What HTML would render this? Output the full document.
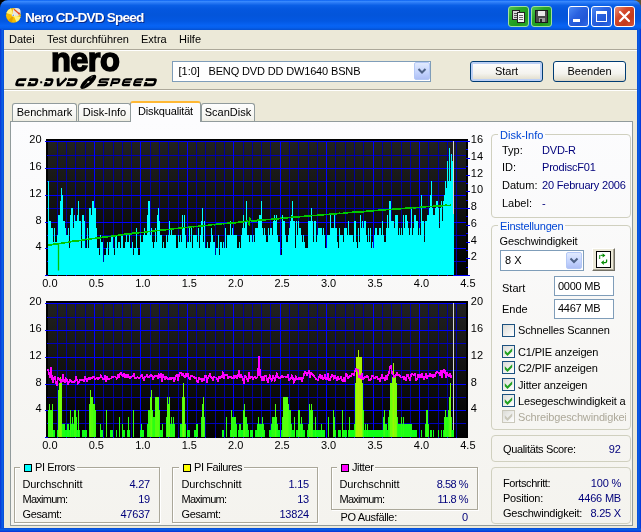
<!DOCTYPE html><html><head><meta charset="utf-8"><title>Nero CD-DVD Speed</title><style>
*{box-sizing:border-box;margin:0;padding:0}
html,body{width:641px;height:532px;overflow:hidden;background:#ece9d8}
body{font-family:"Liberation Sans",sans-serif;font-size:11px;color:#000;position:relative}
.abs{position:absolute}
#root{position:absolute;left:0;top:0;width:641px;height:532px;will-change:transform;transform:translateZ(0)}
.t{position:absolute;white-space:nowrap;line-height:13px;height:13px}
.nv{color:#00007b}
.r{text-align:right}
#title{left:0;top:0;width:641px;height:30px;background:linear-gradient(to bottom,#0058ee 0%,#3a8cff 4%,#2a7af5 9%,#0a5fe6 18%,#0457df 30%,#0355da 50%,#0358e2 70%,#0763f4 85%,#0660ee 92%,#0550d0 100%);border-radius:8px 8px 0 0}
#bl{left:0;top:29px;width:4px;height:503px;background:linear-gradient(to right,#0831d9,#0855dd 40%,#0a5fe8 70%,#0746d0)}
#br{left:637px;top:29px;width:4px;height:503px;background:linear-gradient(to left,#0831d9,#0855dd 40%,#0a5fe8 70%,#0746d0)}
#bb{left:0;top:528px;width:641px;height:4px;background:linear-gradient(to top,#0831d9,#0855dd 40%,#0a5fe8 70%,#0746d0)}
.cb{position:absolute;top:6px;width:21px;height:21px;border-radius:3px;border:1px solid #fff}
.cbb{background:linear-gradient(135deg,#4d8bf5 0%,#2a62e0 40%,#2257d6 70%,#2f6ae8 100%)}
.cbx{background:linear-gradient(135deg,#e9907a 0%,#d5492b 35%,#c33a1c 70%,#d8553a 100%)}
.cbg{background:linear-gradient(135deg,#52c452 0%,#2aa62a 35%,#1c9a1c 70%,#30ac30 100%);border-color:#9fe09f}
.sep{position:absolute;left:4px;width:633px;height:2px;border-top:1px solid #aca899;border-bottom:1px solid #fff}
.tab{position:absolute;top:103px;height:19px;border:1px solid #919b9c;border-bottom:none;border-radius:3px 3px 0 0;background:linear-gradient(to bottom,#fefefe,#f3f3ee 80%,#ebeadb);text-align:center;line-height:17px}
#pane{left:10px;top:121px;width:623px;height:405px;border:1px solid #919b9c;background:linear-gradient(to bottom,#fcfcfe,#f4f3ee)}
.gb{position:absolute;border:1px solid #d0d0bf;border-radius:4px}
.gt{position:absolute;white-space:nowrap;line-height:13px;color:#0046d5;background:#f8f8f6;padding:0 2px}
.edit{position:absolute;border:1px solid #7f9db9;background:#fff}
.btn{position:absolute;border:1px solid #003c74;border-radius:3px;background:linear-gradient(to bottom,#fff,#f4f3ee 60%,#e3e0d0 90%,#d6d0c5);text-align:center;line-height:19px}
.chk{position:absolute;width:13px;height:13px;border:1px solid #1c5180;background:linear-gradient(135deg,#dcdcd7,#fff)}
</style></head><body><div id="root">
<div class="abs" style="left:0;top:0;width:8px;height:8px;background:#000"></div><div class="abs" style="left:633px;top:0;width:8px;height:8px;background:#5e5232"></div><div id="title" class="abs"></div><div id="bl" class="abs"></div><div id="br" class="abs"></div><div id="bb" class="abs"></div>
<svg class="abs" style="left:0;top:0" width="30" height="30" viewBox="0 0 30 30"><circle cx="13.4" cy="15.3" r="7.4" fill="#f6bd00"/><path d="M13.4 15.3 L6.3 13 A7.4 7.4 0 0 1 11 8.3 Z" fill="#fff27a"/><path d="M13.4 15.3 L20.6 17 A7.4 7.4 0 0 1 16.5 22 Z" fill="#fff27a"/><path d="M13.4 15.3 L8 20.4 A7.4 7.4 0 0 0 12 22.5 Z" fill="#e0a000"/><circle cx="16.6" cy="12" r="4" fill="#e9e6e0"/><path d="M14 9.2 L19.6 14.2" stroke="#e84a1a" stroke-width="1.2"/><circle cx="19" cy="13.6" r="1" fill="#e84a1a"/><circle cx="13.2" cy="15.3" r="1.3" fill="#fff"/><circle cx="13.2" cy="15.3" r="0.7" fill="#3a7ae0"/></svg>
<div class="t" style="left:25px;top:10px;font-size:13.6px;font-weight:bold;color:#fff;line-height:16px;height:16px;text-shadow:1px 1px 0 #0a2a8a;letter-spacing:-0.8px">Nero CD-DVD Speed</div>
<div class="cb cbg" style="left:508px"><svg width="19" height="19" class="abs" style="left:0;top:0" shape-rendering="crispEdges"><rect x="3.5" y="3.5" width="7" height="9" fill="#d8d8d8" stroke="#222"/><path d="M5 6h4M5 8h4M5 10h3" stroke="#555"/><rect x="8.5" y="5.5" width="7" height="10" fill="#f4f4f4" stroke="#222"/><path d="M10 8h4M10 10h4M10 12h4" stroke="#666"/></svg></div>
<div class="cb cbg" style="left:531px"><svg width="19" height="19" class="abs" style="left:0;top:0" shape-rendering="crispEdges"><rect x="3.5" y="3.5" width="12" height="12" fill="#4a4a4a" stroke="#1a1a1a"/><rect x="6" y="4" width="7" height="5" fill="#e8e8e8"/><rect x="7" y="11" width="6" height="4" fill="#9a9a9a"/><rect x="8" y="12" width="2" height="3" fill="#2a2a2a"/></svg></div>
<div class="cb cbb" style="left:568px"><div class="abs" style="left:4px;top:12px;width:7px;height:3px;background:#fff"></div></div>
<div class="cb cbb" style="left:591px"><div class="abs" style="left:4px;top:4px;width:11px;height:11px;border:1px solid #fff;border-top-width:3px"></div></div>
<div class="cb cbx" style="left:614px"><svg width="19" height="19" class="abs" style="left:0;top:0"><path d="M5 5 L14 14 M14 5 L5 14" stroke="#fff" stroke-width="2.2" stroke-linecap="round"/></svg></div>
<div class="t " style="left:9px;top:33px;">Datei</div>
<div class="t " style="left:47px;top:33px;">Test durchführen</div>
<div class="t " style="left:141px;top:33px;">Extra</div>
<div class="t " style="left:179px;top:33px;">Hilfe</div>
<div class="sep" style="top:49px"></div>
<div class="sep" style="top:89px"></div>
<svg class="abs" style="left:0;top:50px" width="170" height="42" viewBox="0 50 170 42"><g transform="translate(0,86.2) skewX(-18)" stroke="#000" fill="none" stroke-linejoin="miter"><path transform="translate(14.5,0)" d="M9.6 -6.6000000000000005H2.9000000000000004Q1.3 -6.6000000000000005 1.3 -5.0V-2.9000000000000004Q1.3 -1.3 2.9000000000000004 -1.3H9.299999999999999" stroke-width="2.6"/><path transform="translate(27.2,0)" d="M0 -6.6000000000000005H6.4Q8.0 -6.6000000000000005 8.0 -5.0V-2.9000000000000004Q8.0 -1.3 6.4 -1.3H1.3V-4.25" stroke-width="2.6"/><path transform="translate(43.5,0)" d="M0 -6.6000000000000005H5.299999999999999Q6.8999999999999995 -6.6000000000000005 6.8999999999999995 -5.0V-2.9000000000000004Q6.8999999999999995 -1.3 5.299999999999999 -1.3H1.3V-4.25" stroke-width="2.6"/><path transform="translate(54.4,0)" d="M1.0 -7.9L3.5 -1.3H5.1L9.6 -7.9" stroke-width="2.6"/><path transform="translate(65.9,0)" d="M0 -6.6000000000000005H7.0Q8.6 -6.6000000000000005 8.6 -5.0V-2.9000000000000004Q8.6 -1.3 7.0 -1.3H1.3V-4.25" stroke-width="2.6"/><path transform="translate(97.1,0)" d="M10.0 -6.825H2.675Q1.075 -6.825 1.075 -5.625V-4.95Q1.075 -3.95 2.675 -3.95H7.325000000000001Q8.925 -3.95 8.925 -2.95V-2.275Q8.925 -1.075 7.325000000000001 -1.075H0" stroke-width="2.15"/><path transform="translate(109.7,0)" d="M1.075 0V-6.825H6.125Q7.7250000000000005 -6.825 7.7250000000000005 -5.625V-4.45Q7.7250000000000005 -3.35 6.125 -3.35H1.075" stroke-width="2.15"/><path transform="translate(121.0,0)" d="M8.8 -6.825H2.675Q1.075 -6.825 1.075 -5.225V-2.675Q1.075 -1.075 2.675 -1.075H8.5M1.075 -3.95H8.200000000000001" stroke-width="2.15"/><path transform="translate(132.3,0)" d="M8.6 -6.825H2.675Q1.075 -6.825 1.075 -5.225V-2.675Q1.075 -1.075 2.675 -1.075H8.299999999999999M1.075 -3.95H8.0" stroke-width="2.15"/><path transform="translate(143.4,0)" d="M0 -6.6000000000000005H8.7Q10.299999999999999 -6.6000000000000005 10.299999999999999 -5.0V-2.9000000000000004Q10.299999999999999 -1.3 8.7 -1.3H1.3V-4.25" stroke-width="2.6"/></g><rect x="40.2" y="81.3" width="2" height="2" fill="#000"/><g transform="translate(88.3,81.9) rotate(-40)"><ellipse cx="0" cy="0" rx="10" ry="3.7" fill="#000"/><ellipse cx="0" cy="0" rx="1.5" ry="0.9" fill="#ece9d8"/><path d="M-8.5 1.1 L-1.5 0.2 L-1.5 -0.3 Z" fill="#ece9d8" opacity=".8"/><path d="M3 -1.4 L7 -2.2 L6.5 -1.2 Z" fill="#ece9d8" opacity=".6"/></g><text x="51" y="71.4" font-family="Liberation Sans, sans-serif" font-weight="bold" font-size="32.6" letter-spacing="-0.6" stroke="#000" stroke-width="1.5" fill="#000">nero</text></svg>
<div class="edit" style="left:172px;top:61px;width:259px;height:21px"></div>
<div class="t " style="left:178.5px;top:65px;">[1:0]</div>
<div class="t " style="left:208.5px;top:65px;letter-spacing:-0.15px;">BENQ DVD DD DW1640 BSNB</div>
<div class="abs" style="left:414px;top:62px;width:16px;height:18px;border-radius:2px;background:linear-gradient(to bottom,#e1eafe,#c3d3fd 60%,#aebff5);border:1px solid #b4c8f6"><svg width="14" height="16" class="abs" style="left:0;top:0"><path d="M3.5 6 L7 9.5 L10.5 6" stroke="#4d6185" stroke-width="2" fill="none"/></svg></div>
<div class="btn" style="left:470px;top:61px;width:73px;height:21px;box-shadow:inset 0 0 0 2px #bcd0f5">Start</div>
<div class="btn" style="left:553px;top:61px;width:73px;height:21px">Beenden</div>
<div class="tab" style="left:12px;width:65px">Benchmark</div>
<div class="tab" style="left:78px;width:53px">Disk-Info</div>
<div class="tab" style="left:201px;width:54px">ScanDisk</div>
<div id="pane" class="abs"></div>
<div class="tab" style="left:130px;width:71px;top:101px;height:21px;background:#fcfcfe;border-top:2px solid #ffb834;border-radius:3px 3px 0 0;line-height:17px;letter-spacing:-0.15px">Diskqualität</div>
<svg class="abs" style="left:0;top:0" width="641" height="532" viewBox="0 0 641 532"><defs><linearGradient id="bg" x1="0" y1="0" x2="0" y2="1"><stop offset="0" stop-color="#222221"/><stop offset="1" stop-color="#000"/></linearGradient></defs><g shape-rendering="crispEdges"><rect x="46" y="139" width="422" height="137" fill="url(#bg)"/><g fill="#00009c"><rect x="57" y="141" width="1" height="135"/><rect x="66" y="141" width="1" height="135"/><rect x="75" y="141" width="1" height="135"/><rect x="85" y="141" width="1" height="135"/><rect x="103" y="141" width="1" height="135"/><rect x="113" y="141" width="1" height="135"/><rect x="122" y="141" width="1" height="135"/><rect x="131" y="141" width="1" height="135"/><rect x="150" y="141" width="1" height="135"/><rect x="159" y="141" width="1" height="135"/><rect x="168" y="141" width="1" height="135"/><rect x="178" y="141" width="1" height="135"/><rect x="196" y="141" width="1" height="135"/><rect x="205" y="141" width="1" height="135"/><rect x="215" y="141" width="1" height="135"/><rect x="224" y="141" width="1" height="135"/><rect x="243" y="141" width="1" height="135"/><rect x="252" y="141" width="1" height="135"/><rect x="261" y="141" width="1" height="135"/><rect x="270" y="141" width="1" height="135"/><rect x="289" y="141" width="1" height="135"/><rect x="298" y="141" width="1" height="135"/><rect x="308" y="141" width="1" height="135"/><rect x="317" y="141" width="1" height="135"/><rect x="335" y="141" width="1" height="135"/><rect x="345" y="141" width="1" height="135"/><rect x="354" y="141" width="1" height="135"/><rect x="363" y="141" width="1" height="135"/><rect x="382" y="141" width="1" height="135"/><rect x="391" y="141" width="1" height="135"/><rect x="401" y="141" width="1" height="135"/><rect x="410" y="141" width="1" height="135"/><rect x="428" y="141" width="1" height="135"/><rect x="438" y="141" width="1" height="135"/><rect x="447" y="141" width="1" height="135"/><rect x="456" y="141" width="1" height="135"/></g><g fill="#0000b8"><rect x="47" y="261" width="419" height="1"/><rect x="47" y="235" width="419" height="1"/><rect x="47" y="208" width="419" height="1"/><rect x="47" y="181" width="419" height="1"/><rect x="47" y="155" width="419" height="1"/></g><g fill="#0000ff"><rect x="47" y="141" width="1" height="135"/><rect x="94" y="141" width="1" height="135"/><rect x="140" y="141" width="1" height="135"/><rect x="187" y="141" width="1" height="135"/><rect x="233" y="141" width="1" height="135"/><rect x="280" y="141" width="1" height="135"/><rect x="326" y="141" width="1" height="135"/><rect x="373" y="141" width="1" height="135"/><rect x="419" y="141" width="1" height="135"/><rect x="466" y="141" width="1" height="135"/><rect x="45" y="275" width="421" height="1"/><rect x="45" y="248" width="421" height="1"/><rect x="45" y="222" width="421" height="1"/><rect x="45" y="195" width="421" height="1"/><rect x="45" y="168" width="421" height="1"/><rect x="45" y="141" width="421" height="1"/></g><path d="M48 181h1V275H48zM49 221h2V275H49zM51 228h2V275H51zM53 242h1V275H53zM54 228h1V275H54zM55 242h2V275H55zM57 235h1V275H57zM58 215h2V275H58zM60 201h1V275H60zM61 188h1V275H61zM62 195h1V275H62zM63 221h2V275H63zM65 228h1V275H65zM66 235h2V275H66zM68 228h1V275H68zM69 248h1V275H69zM70 215h1V275H70zM71 208h2V275H71zM73 228h1V275H73zM74 215h1V275H74zM75 221h2V275H75zM77 215h1V275H77zM78 201h1V275H78zM79 221h2V275H79zM81 248h1V275H81zM82 215h2V275H82zM84 221h1V275H84zM85 248h2V275H85zM87 228h1V275H87zM88 248h1V275H88zM89 208h2V275H89zM91 215h1V275H91zM92 201h2V275H92zM94 208h2V275H94zM96 228h1V275H96zM97 248h2V275H97zM99 255h1V275H99zM100 235h1V275H100zM101 242h2V275H101zM103 262h1V275H103zM104 255h2V275H104zM106 248h1V275H106zM107 242h1V275H107zM108 255h1V275H108zM109 242h2V275H109zM111 235h2V275H111zM113 248h1V275H113zM114 255h1V275H114zM115 235h2V275H115zM117 248h1V275H117zM118 242h2V275H118zM120 248h1V275H120zM121 235h2V275H121zM123 248h2V275H123zM125 242h1V275H125zM126 235h1V275H126zM127 242h2V275H127zM129 235h1V275H129zM130 248h2V275H130zM132 242h1V275H132zM133 255h1V275H133zM134 248h2V275H134zM136 228h1V275H136zM137 248h1V275H137zM138 255h2V275H138zM140 235h1V275H140zM141 242h2V275H141zM143 235h1V275H143zM144 228h1V275H144zM145 235h2V275H145zM147 215h1V275H147zM148 201h2V275H148zM150 235h1V275H150zM151 228h1V275H151zM152 242h1V275H152zM153 248h1V275H153zM154 242h1V275H154zM155 228h1V275H155zM156 242h1V275H156zM157 215h1V275H157zM158 208h1V275H158zM159 221h1V275H159zM160 235h2V275H160zM162 248h1V275H162zM163 242h1V275H163zM164 248h2V275H164zM166 235h1V275H166zM167 242h1V275H167zM168 235h1V275H168zM169 221h1V275H169zM170 235h1V275H170zM171 228h1V275H171zM172 235h4V275H172zM176 248h2V275H176zM178 235h1V275H178zM179 242h1V275H179zM180 235h1V275H180zM181 242h1V275H181zM182 215h1V275H182zM183 228h1V275H183zM184 215h1V275H184zM185 235h1V275H185zM186 248h1V275H186zM187 242h2V275H187zM189 228h1V275H189zM190 242h1V275H190zM191 228h1V275H191zM192 248h1V275H192zM193 235h4V275H193zM197 242h1V275H197zM198 228h1V275H198zM199 248h1V275H199zM200 235h1V275H200zM201 221h1V275H201zM202 208h1V275H202zM203 242h1V275H203zM204 221h1V275H204zM205 248h2V275H205zM207 242h1V275H207zM208 248h2V275H208zM210 242h1V275H210zM211 228h1V275H211zM212 235h1V275H212zM213 242h2V275H213zM215 255h1V275H215zM216 248h2V275H216zM218 235h1V275H218zM219 255h1V275H219zM220 242h2V275H220zM222 248h1V275H222zM223 242h1V275H223zM224 248h1V275H224zM225 228h1V275H225zM226 248h1V275H226zM227 235h3V275H227zM230 221h1V275H230zM231 235h1V275H231zM232 228h1V275H232zM233 235h4V275H233zM237 248h2V275H237zM239 242h1V275H239zM240 248h1V275H240zM241 235h1V275H241zM242 228h1V275H242zM243 215h1V275H243zM244 228h1V275H244zM245 221h1V275H245zM246 201h1V275H246zM247 235h2V275H247zM249 242h1V275H249zM250 235h2V275H250zM252 242h1V275H252zM253 235h1V275H253zM254 242h1V275H254zM255 228h3V275H255zM258 221h1V275H258zM259 215h2V275H259zM261 201h1V275H261zM262 228h1V275H262zM263 235h1V275H263zM264 228h1V275H264zM265 235h1V275H265zM266 242h2V275H266zM268 228h1V275H268zM269 235h1V275H269zM270 228h2V275H270zM272 235h1V275H272zM273 221h1V275H273zM274 215h1V275H274zM275 221h1V275H275zM276 215h1V275H276zM277 235h1V275H277zM278 242h2V275H278zM280 255h2V275H280zM282 215h1V275H282zM283 221h2V275H283zM285 235h1V275H285zM286 242h2V275H286zM288 235h1V275H288zM289 228h1V275H289zM290 221h1V275H290zM291 215h1V275H291zM292 201h1V275H292zM293 221h2V275H293zM295 248h1V275H295zM296 221h1V275H296zM297 235h1V275H297zM298 221h1V275H298zM299 228h2V275H299zM301 235h1V275H301zM302 242h1V275H302zM303 235h1V275H303zM304 242h1V275H304zM305 248h3V275H305zM308 221h3V275H308zM311 208h1V275H311zM312 221h1V275H312zM313 242h1V275H313zM314 221h2V275H314zM316 242h1V275H316zM317 235h1V275H317zM318 228h4V275H318zM322 235h1V275H322zM323 228h1V275H323zM324 235h1V275H324zM325 248h2V275H325zM327 235h3V275H327zM330 215h1V275H330zM331 228h3V275H331zM334 215h1V275H334zM335 228h2V275H335zM337 242h1V275H337zM338 248h1V275H338zM339 228h1V275H339zM340 235h3V275H340zM343 242h1V275H343zM344 228h3V275H344zM347 235h1V275H347zM348 221h1V275H348zM349 235h4V275H349zM353 242h1V275H353zM354 221h2V275H354zM356 242h1V275H356zM357 248h1V275H357zM358 228h1V275H358zM359 242h1V275H359zM360 215h1V275H360zM361 228h1V275H361zM362 221h1V275H362zM363 228h1V275H363zM364 221h2V275H364zM366 235h1V275H366zM367 242h1V275H367zM368 228h1V275H368zM369 242h1V275H369zM370 228h1V275H370zM371 248h1V275H371zM372 242h1V275H372zM373 248h1V275H373zM374 235h1V275H374zM375 228h2V275H375zM377 235h2V275H377zM379 228h2V275H379zM381 235h1V275H381zM382 221h1V275H382zM383 235h1V275H383zM384 242h2V275H384zM386 228h1V275H386zM387 215h1V275H387zM388 228h1V275H388zM389 201h2V275H389zM391 221h3V275H391zM394 228h1V275H394zM395 215h3V275H395zM398 235h1V275H398zM399 228h1V275H399zM400 235h1V275H400zM401 228h1V275H401zM402 235h1V275H402zM403 215h1V275H403zM404 228h1V275H404zM405 215h2V275H405zM407 221h1V275H407zM408 228h1V275H408zM409 235h1V275H409zM410 228h1V275H410zM411 208h1V275H411zM412 235h1V275H412zM413 228h1V275H413zM414 215h2V275H414zM416 221h2V275H416zM418 235h1V275H418zM419 228h1V275H419zM420 235h1V275H420zM421 195h1V275H421zM422 221h2V275H422zM424 242h1V275H424zM425 221h2V275H425zM427 215h2V275H427zM429 208h1V275H429zM430 195h1V275H430zM431 181h1V275H431zM432 208h1V275H432zM433 215h2V275H433zM435 208h1V275H435zM436 201h2V275H436zM438 208h1V275H438zM439 228h1V275H439zM440 208h1V275H440zM441 201h1V275H441zM442 221h1V275H442zM443 201h1V275H443zM444 195h1V275H444zM445 181h1V275H445zM446 188h1V275H446zM447 161h1V275H447zM448 181h1V275H448zM449 148h1V275H449zM450 181h1V275H450zM451 154h1V275H451zM452 161h1V275H452z" fill="#00ffff"/><rect x="48" y="275" width="405" height="1" fill="#000"/><g fill="#0000ff"><rect x="47" y="275" width="1" height="1"/><rect x="57" y="275" width="1" height="1"/><rect x="66" y="275" width="1" height="1"/><rect x="75" y="275" width="1" height="1"/><rect x="85" y="275" width="1" height="1"/><rect x="94" y="275" width="1" height="1"/><rect x="103" y="275" width="1" height="1"/><rect x="113" y="275" width="1" height="1"/><rect x="122" y="275" width="1" height="1"/><rect x="131" y="275" width="1" height="1"/><rect x="140" y="275" width="1" height="1"/><rect x="150" y="275" width="1" height="1"/><rect x="159" y="275" width="1" height="1"/><rect x="168" y="275" width="1" height="1"/><rect x="178" y="275" width="1" height="1"/><rect x="187" y="275" width="1" height="1"/><rect x="196" y="275" width="1" height="1"/><rect x="205" y="275" width="1" height="1"/><rect x="215" y="275" width="1" height="1"/><rect x="224" y="275" width="1" height="1"/><rect x="233" y="275" width="1" height="1"/><rect x="243" y="275" width="1" height="1"/><rect x="252" y="275" width="1" height="1"/><rect x="261" y="275" width="1" height="1"/><rect x="270" y="275" width="1" height="1"/><rect x="280" y="275" width="1" height="1"/><rect x="289" y="275" width="1" height="1"/><rect x="298" y="275" width="1" height="1"/><rect x="308" y="275" width="1" height="1"/><rect x="317" y="275" width="1" height="1"/><rect x="326" y="275" width="1" height="1"/><rect x="335" y="275" width="1" height="1"/><rect x="345" y="275" width="1" height="1"/><rect x="354" y="275" width="1" height="1"/><rect x="363" y="275" width="1" height="1"/><rect x="373" y="275" width="1" height="1"/><rect x="382" y="275" width="1" height="1"/><rect x="391" y="275" width="1" height="1"/><rect x="401" y="275" width="1" height="1"/><rect x="410" y="275" width="1" height="1"/><rect x="419" y="275" width="1" height="1"/><rect x="428" y="275" width="1" height="1"/><rect x="438" y="275" width="1" height="1"/><rect x="447" y="275" width="1" height="1"/></g><rect x="453" y="141" width="1" height="73" fill="#d4d4d4"/><rect x="453" y="214" width="1" height="61" fill="#00ffff"/><rect x="46" y="139" width="422" height="2" fill="#000"/><rect x="46" y="139" width="2" height="137" fill="#000"/><rect x="466" y="139" width="2" height="137" fill="#000"/><g fill="#0000ff"><rect x="466" y="275" width="4" height="1"/><rect x="466" y="267" width="2" height="1"/><rect x="466" y="258" width="4" height="1"/><rect x="466" y="250" width="2" height="1"/><rect x="466" y="242" width="4" height="1"/><rect x="466" y="233" width="2" height="1"/><rect x="466" y="225" width="4" height="1"/><rect x="466" y="216" width="2" height="1"/><rect x="466" y="208" width="4" height="1"/><rect x="466" y="200" width="2" height="1"/><rect x="466" y="191" width="4" height="1"/><rect x="466" y="183" width="2" height="1"/><rect x="466" y="175" width="4" height="1"/><rect x="466" y="166" width="2" height="1"/><rect x="466" y="158" width="4" height="1"/><rect x="466" y="149" width="2" height="1"/><rect x="466" y="141" width="4" height="1"/><rect x="45" y="141" width="3" height="1"/><rect x="47" y="155" width="1" height="1"/><rect x="45" y="168" width="3" height="1"/><rect x="47" y="181" width="1" height="1"/><rect x="45" y="195" width="3" height="1"/><rect x="47" y="208" width="1" height="1"/><rect x="45" y="222" width="3" height="1"/><rect x="47" y="235" width="1" height="1"/><rect x="45" y="248" width="3" height="1"/><rect x="47" y="261" width="1" height="1"/><rect x="45" y="275" width="3" height="1"/></g></g><polyline points="48,245.2 49,245.2 50,245.0 51,244.9 52,244.8 53,244.3 54,244.1 55,244.4 56,243.9 57,243.7 58,244.0 59,243.5 60,243.6 61,243.2 62,243.2 63,242.7 64,242.9 65,242.8 66,242.5 67,242.5 68,242.3 69,241.8 70,242.0 71,241.8 72,241.4 73,241.1 74,241.5 75,241.1 76,241.1 77,241.0 78,240.8 79,240.8 80,240.3 81,240.4 82,240.1 83,240.2 84,240.0 85,239.4 86,239.3 87,239.2 88,239.5 89,239.1 90,239.0 91,238.7 92,238.7 93,238.5 94,238.3 95,238.3 96,238.2 97,238.2 98,238.0 99,238.0 100,237.8 101,237.8 102,237.4 103,237.0 104,237.3 105,237.2 106,237.1 107,236.7 108,236.7 109,236.2 110,236.5 111,236.2 112,235.9 113,235.6 114,236.0 115,235.9 116,235.3 117,235.6 118,235.2 119,234.9 120,234.9 121,235.1 122,235.0 123,234.4 124,234.6 125,234.1 126,234.4 127,234.1 128,234.3 129,234.2 130,233.8 131,234.0 132,233.4 133,233.2 134,233.4 135,232.9 136,232.9 137,232.9 138,232.9 139,232.5 140,232.3 141,232.7 142,232.2 143,232.5 144,232.4 145,231.9 146,231.9 147,231.8 148,231.7 149,231.6 150,231.5 151,231.4 152,231.5 153,231.1 154,230.9 155,231.0 156,230.6 157,230.5 158,230.8 159,230.4 160,230.3 161,229.9 162,230.0 163,230.0 164,229.6 165,229.8 166,229.7 167,229.3 168,229.5 169,229.3 170,229.3 171,229.0 172,229.1 173,229.0 174,228.5 175,228.4 176,228.6 177,228.7 178,228.2 179,228.2 180,228.2 181,227.9 182,227.8 183,227.7 184,227.6 185,227.6 186,227.4 187,227.3 188,227.4 189,226.9 190,227.1 191,227.1 192,226.7 193,226.6 194,226.8 195,226.4 196,226.3 197,226.3 198,226.4 199,225.9 200,225.9 201,225.8 202,226.0 203,225.7 204,225.8 205,225.3 206,225.3 207,225.4 208,225.5 209,225.1 210,224.9 211,224.7 212,224.8 213,224.5 214,224.8 215,224.7 216,224.2 217,224.2 218,224.4 219,224.2 220,224.2 221,223.8 222,223.6 223,223.6 224,223.8 225,223.4 226,223.4 227,223.3 228,223.2 229,223.1 230,223.3 231,222.8 232,222.6 233,223.0 234,222.9 235,222.9 236,222.4 237,222.7 238,222.6 239,222.0 240,222.3 241,222.2 242,222.0 243,221.8 244,221.6 245,221.5 246,221.4 247,221.2 248,221.4 249,224.1 250,218.4 251,220.8 252,221.2 253,221.0 254,221.1 255,220.9 256,220.9 257,220.6 258,220.1 259,220.5 260,220.1 261,220.0 262,220.2 263,220.0 264,219.8 265,220.1 266,219.8 267,219.5 268,219.4 269,219.7 270,219.3 271,219.4 272,219.1 273,218.9 274,219.0 275,219.1 276,218.6 277,218.9 278,218.9 279,218.7 280,218.6 281,218.1 282,218.4 283,218.4 284,217.8 285,217.9 286,217.8 287,217.9 288,217.7 289,217.6 290,217.7 291,217.2 292,217.1 293,217.1 294,217.0 295,216.9 296,217.3 297,217.2 298,216.6 299,216.8 300,216.6 301,216.5 302,216.5 303,216.5 304,216.4 305,216.2 306,216.0 307,216.0 308,215.8 309,216.0 310,216.0 311,215.7 312,215.4 313,215.4 314,215.5 315,215.5 316,215.5 317,215.2 318,215.4 319,215.2 320,215.0 321,214.9 322,214.9 323,214.9 324,214.6 325,214.7 326,214.5 327,214.3 328,214.4 329,214.4 330,213.9 331,214.1 332,214.0 333,214.2 334,214.1 335,213.7 336,213.9 337,213.8 338,213.4 339,213.4 340,213.2 341,213.5 342,213.3 343,213.4 344,213.2 345,213.1 346,213.0 347,212.9 348,212.5 349,212.7 350,212.3 351,212.3 352,212.6 353,212.1 354,212.0 355,211.9 356,212.3 357,211.8 358,211.7 359,212.1 360,211.6 361,211.9 362,211.7 363,211.8 364,211.7 365,211.4 366,211.5 367,211.0 368,211.3 369,211.1 370,211.1 371,210.7 372,211.0 373,211.0 374,210.4 375,210.5 376,210.6 377,210.7 378,210.2 379,210.1 380,210.1 381,210.2 382,210.2 383,209.9 384,209.8 385,209.8 386,209.7 387,209.6 388,209.4 389,209.5 390,209.7 391,209.3 392,209.5 393,209.0 394,209.3 395,209.2 396,209.1 397,208.9 398,208.8 399,208.9 400,208.9 401,208.4 402,208.3 403,208.6 404,208.7 405,208.3 406,208.2 407,208.3 408,207.9 409,207.9 410,207.8 411,207.9 412,207.7 413,207.6 414,207.8 415,207.9 416,207.4 417,207.6 418,207.3 419,207.5 420,207.3 421,207.0 422,206.9 423,206.7 424,206.9 425,206.8 426,206.6 427,206.6 428,206.5 429,206.7 430,206.3 431,206.7 432,206.3 433,206.3 434,206.2 435,206.3 436,206.2 437,206.0 438,205.9 439,206.0 440,206.0 441,205.6 442,205.8 443,205.8 444,205.5 445,205.2 446,205.2 447,205.4 448,205.3 449,205.4 450,205.3 451,204.8" fill="none" stroke="#00c800" stroke-width="1.6" shape-rendering="crispEdges"/><path d="M58.5 243 V270.5" stroke="#00c400" stroke-width="1.3" fill="none"/><g font-family="Liberation Sans, sans-serif" font-size="11" fill="#000"><text x="41.6" y="143.1" text-anchor="end">20</text><text x="41.6" y="169.9" text-anchor="end">16</text><text x="41.6" y="196.7" text-anchor="end">12</text><text x="41.6" y="223.5" text-anchor="end">8</text><text x="41.6" y="250.3" text-anchor="end">4</text><text x="470.8" y="260.4">2</text><text x="470.8" y="243.6">4</text><text x="470.8" y="226.8">6</text><text x="470.8" y="210.1">8</text><text x="470.8" y="193.3">10</text><text x="470.8" y="176.6">12</text><text x="470.8" y="159.8">14</text><text x="470.8" y="143.1">16</text><text x="49.9" y="287.2" text-anchor="middle">0.0</text><text x="96.3" y="287.2" text-anchor="middle">0.5</text><text x="142.8" y="287.2" text-anchor="middle">1.0</text><text x="189.3" y="287.2" text-anchor="middle">1.5</text><text x="235.7" y="287.2" text-anchor="middle">2.0</text><text x="282.1" y="287.2" text-anchor="middle">2.5</text><text x="328.6" y="287.2" text-anchor="middle">3.0</text><text x="375.1" y="287.2" text-anchor="middle">3.5</text><text x="421.5" y="287.2" text-anchor="middle">4.0</text><text x="467.9" y="287.2" text-anchor="middle">4.5</text></g></svg>
<svg class="abs" style="left:0;top:0" width="641" height="532" viewBox="0 0 641 532"><defs><linearGradient id="bg2" x1="0" y1="0" x2="0" y2="1"><stop offset="0" stop-color="#222221"/><stop offset="1" stop-color="#000"/></linearGradient></defs><g shape-rendering="crispEdges"><rect x="46" y="301" width="422" height="137" fill="url(#bg2)"/><g fill="#00009c"><rect x="57" y="303" width="1" height="135"/><rect x="66" y="303" width="1" height="135"/><rect x="75" y="303" width="1" height="135"/><rect x="85" y="303" width="1" height="135"/><rect x="103" y="303" width="1" height="135"/><rect x="113" y="303" width="1" height="135"/><rect x="122" y="303" width="1" height="135"/><rect x="131" y="303" width="1" height="135"/><rect x="150" y="303" width="1" height="135"/><rect x="159" y="303" width="1" height="135"/><rect x="168" y="303" width="1" height="135"/><rect x="178" y="303" width="1" height="135"/><rect x="196" y="303" width="1" height="135"/><rect x="205" y="303" width="1" height="135"/><rect x="215" y="303" width="1" height="135"/><rect x="224" y="303" width="1" height="135"/><rect x="243" y="303" width="1" height="135"/><rect x="252" y="303" width="1" height="135"/><rect x="261" y="303" width="1" height="135"/><rect x="270" y="303" width="1" height="135"/><rect x="289" y="303" width="1" height="135"/><rect x="298" y="303" width="1" height="135"/><rect x="308" y="303" width="1" height="135"/><rect x="317" y="303" width="1" height="135"/><rect x="335" y="303" width="1" height="135"/><rect x="345" y="303" width="1" height="135"/><rect x="354" y="303" width="1" height="135"/><rect x="363" y="303" width="1" height="135"/><rect x="382" y="303" width="1" height="135"/><rect x="391" y="303" width="1" height="135"/><rect x="401" y="303" width="1" height="135"/><rect x="410" y="303" width="1" height="135"/><rect x="428" y="303" width="1" height="135"/><rect x="438" y="303" width="1" height="135"/><rect x="447" y="303" width="1" height="135"/><rect x="456" y="303" width="1" height="135"/></g><g fill="#0000b8"><rect x="47" y="423" width="419" height="1"/><rect x="47" y="397" width="419" height="1"/><rect x="47" y="370" width="419" height="1"/><rect x="47" y="343" width="419" height="1"/><rect x="47" y="317" width="419" height="1"/></g><g fill="#0000ff"><rect x="47" y="303" width="1" height="135"/><rect x="94" y="303" width="1" height="135"/><rect x="140" y="303" width="1" height="135"/><rect x="187" y="303" width="1" height="135"/><rect x="233" y="303" width="1" height="135"/><rect x="280" y="303" width="1" height="135"/><rect x="326" y="303" width="1" height="135"/><rect x="373" y="303" width="1" height="135"/><rect x="419" y="303" width="1" height="135"/><rect x="466" y="303" width="1" height="135"/><rect x="45" y="437" width="421" height="1"/><rect x="45" y="410" width="421" height="1"/><rect x="45" y="384" width="421" height="1"/><rect x="45" y="357" width="421" height="1"/><rect x="45" y="330" width="421" height="1"/><rect x="45" y="303" width="421" height="1"/></g><path d="M48 410h1V437H48zM50 410h1V437H50zM51 410h1V437H51zM70 410h1V437H70zM74 410h1V437H74zM75 410h1V437H75zM78 410h1V437H78zM95 410h1V437H95zM106 410h1V437H106zM133 410h1V437H133zM148 410h1V437H148zM149 410h1V437H149zM152 410h1V437H152zM159 410h1V437H159zM231 410h1V437H231zM243 410h1V437H243zM289 410h1V437H289zM290 410h1V437H290zM298 410h1V437H298zM299 410h1V437H299zM310 410h1V437H310zM312 410h1V437H312zM333 410h1V437H333zM342 410h1V437H342zM363 410h1V437H363zM384 410h1V437H384zM389 410h1V437H389zM426 410h1V437H426zM427 410h1V437H427zM445 410h1V437H445zM448 410h1V437H448z" fill="#38ff10"/><path d="M49 404h1V437H49zM52 404h1V437H52zM89 404h1V437H89zM93 404h1V437H93zM94 404h1V437H94zM168 404h1V437H168zM202 404h1V437H202zM244 404h1V437H244zM275 404h1V437H275zM288 404h1V437H288zM309 404h1V437H309zM311 404h1V437H311z" fill="#46ff0e"/><path d="M53 430h1V437H53zM54 430h1V437H54zM57 430h1V437H57zM65 430h1V437H65zM66 430h1V437H66zM69 430h1V437H69zM77 430h1V437H77zM79 430h1V437H79zM82 430h1V437H82zM83 430h1V437H83zM84 430h1V437H84zM85 430h1V437H85zM86 430h1V437H86zM101 430h1V437H101zM102 430h1V437H102zM110 430h1V437H110zM111 430h1V437H111zM112 430h1V437H112zM116 430h1V437H116zM123 430h1V437H123zM124 430h1V437H124zM127 430h1V437H127zM129 430h1V437H129zM140 430h1V437H140zM142 430h1V437H142zM143 430h1V437H143zM160 430h1V437H160zM161 430h1V437H161zM187 430h1V437H187zM188 430h1V437H188zM189 430h1V437H189zM194 430h1V437H194zM195 430h1V437H195zM222 430h1V437H222zM223 430h1V437H223zM230 430h1V437H230zM238 430h1V437H238zM241 430h1V437H241zM242 430h1V437H242zM248 430h1V437H248zM250 430h1V437H250zM251 430h1V437H251zM252 430h1V437H252zM255 430h1V437H255zM256 430h1V437H256zM264 430h1V437H264zM269 430h1V437H269zM270 430h1V437H270zM278 430h1V437H278zM279 430h1V437H279zM281 430h1V437H281zM292 430h1V437H292zM293 430h1V437H293zM296 430h1V437H296zM297 430h1V437H297zM303 430h1V437H303zM304 430h1V437H304zM307 430h1V437H307zM313 430h1V437H313zM314 430h1V437H314zM316 430h1V437H316zM317 430h1V437H317zM318 430h1V437H318zM319 430h1V437H319zM320 430h1V437H320zM322 430h1V437H322zM323 430h1V437H323zM324 430h1V437H324zM335 430h1V437H335zM338 430h1V437H338zM339 430h1V437H339zM340 430h1V437H340zM343 430h1V437H343zM344 430h1V437H344zM345 430h1V437H345zM346 430h1V437H346zM348 430h1V437H348zM350 430h1V437H350zM351 430h1V437H351zM352 430h1V437H352zM353 430h1V437H353zM364 430h1V437H364zM366 430h1V437H366zM368 430h1V437H368zM369 430h1V437H369zM370 430h1V437H370zM371 430h1V437H371zM372 430h1V437H372zM373 430h1V437H373zM374 430h1V437H374zM375 430h1V437H375zM376 430h1V437H376zM377 430h1V437H377zM378 430h1V437H378zM379 430h1V437H379zM380 430h1V437H380zM381 430h1V437H381zM382 430h1V437H382zM387 430h1V437H387zM412 430h1V437H412zM413 430h1V437H413zM414 430h1V437H414zM415 430h1V437H415zM416 430h1V437H416zM421 430h1V437H421zM430 430h1V437H430zM431 430h1V437H431zM433 430h1V437H433zM438 430h1V437H438zM441 430h1V437H441zM443 430h1V437H443zM452 430h1V437H452z" fill="#0eff16"/><path d="M58 390h1V437H58zM90 390h1V437H90zM151 390h1V437H151z" fill="#62ff0a"/><path d="M59 383h1V437H59zM61 383h1V437H61zM183 383h1V437H183zM355 383h1V437H355zM362 383h1V437H362zM390 383h1V437H390zM391 383h1V437H391zM396 383h1V437H396zM450 383h1V437H450z" fill="#70ff08"/><path d="M60 377h1V437H60zM392 377h1V437H392zM394 377h1V437H394zM395 377h1V437H395z" fill="#7eff06"/><path d="M62 424h1V437H62zM63 424h1V437H63zM64 424h1V437H64zM67 424h1V437H67zM68 424h1V437H68zM71 424h1V437H71zM73 424h1V437H73zM100 424h1V437H100zM122 424h1V437H122zM141 424h1V437H141zM147 424h1V437H147zM162 424h1V437H162zM170 424h1V437H170zM172 424h1V437H172zM174 424h1V437H174zM180 424h1V437H180zM181 424h1V437H181zM185 424h1V437H185zM196 424h1V437H196zM197 424h1V437H197zM236 424h1V437H236zM239 424h1V437H239zM240 424h1V437H240zM247 424h1V437H247zM257 424h1V437H257zM259 424h1V437H259zM260 424h1V437H260zM261 424h1V437H261zM263 424h1V437H263zM271 424h1V437H271zM277 424h1V437H277zM291 424h1V437H291zM300 424h1V437H300zM302 424h1V437H302zM308 424h1V437H308zM321 424h1V437H321zM354 424h1V437H354zM365 424h1V437H365zM367 424h1V437H367zM385 424h1V437H385zM386 424h1V437H386zM398 424h1V437H398zM399 424h1V437H399zM400 424h1V437H400zM402 424h1V437H402zM404 424h1V437H404zM405 424h1V437H405zM406 424h1V437H406zM407 424h1V437H407zM408 424h1V437H408zM409 424h1V437H409zM410 424h1V437H410zM411 424h1V437H411zM425 424h1V437H425zM428 424h1V437H428z" fill="#1cff14"/><path d="M72 417h1V437H72zM76 417h1V437H76zM119 417h1V437H119zM128 417h1V437H128zM153 417h1V437H153zM154 417h1V437H154zM166 417h1V437H166zM171 417h1V437H171zM173 417h1V437H173zM201 417h1V437H201zM204 417h1V437H204zM226 417h1V437H226zM232 417h1V437H232zM233 417h1V437H233zM234 417h1V437H234zM235 417h1V437H235zM245 417h1V437H245zM246 417h1V437H246zM258 417h1V437H258zM262 417h1V437H262zM272 417h1V437H272zM273 417h1V437H273zM274 417h1V437H274zM276 417h1V437H276zM282 417h1V437H282zM294 417h1V437H294zM301 417h1V437H301zM315 417h1V437H315zM328 417h1V437H328zM334 417h1V437H334zM349 417h1V437H349zM383 417h1V437H383zM388 417h1V437H388zM397 417h1V437H397zM401 417h1V437H401zM403 417h1V437H403zM444 417h1V437H444zM446 417h1V437H446zM447 417h1V437H447zM451 417h1V437H451z" fill="#2aff12"/><path d="M91 397h1V437H91zM92 397h1V437H92zM150 397h1V437H150zM155 397h1V437H155zM156 397h1V437H156zM157 397h1V437H157zM158 397h1V437H158zM167 397h1V437H167zM169 397h1V437H169zM182 397h1V437H182zM184 397h1V437H184zM203 397h1V437H203zM283 397h1V437H283zM284 397h1V437H284zM285 397h1V437H285zM286 397h1V437H286zM287 397h1V437H287zM449 397h1V437H449z" fill="#54ff0c"/><path d="M356 357h1V437H356zM357 357h1V437H357zM359 357h1V437H359zM360 357h1V437H360zM361 357h1V437H361z" fill="#a8f400"/><path d="M358 350h1V437H358z" fill="#aff400"/><path d="M393 363h1V437H393z" fill="#9af402"/><rect x="453" y="303" width="1" height="127" fill="#d4d4d4"/><rect x="453" y="430" width="1" height="7" fill="#20ff18"/><rect x="48" y="437" width="418" height="1" fill="#000"/><g fill="#0000ff"><rect x="47" y="437" width="1" height="1"/><rect x="57" y="437" width="1" height="1"/><rect x="66" y="437" width="1" height="1"/><rect x="75" y="437" width="1" height="1"/><rect x="85" y="437" width="1" height="1"/><rect x="94" y="437" width="1" height="1"/><rect x="103" y="437" width="1" height="1"/><rect x="113" y="437" width="1" height="1"/><rect x="122" y="437" width="1" height="1"/><rect x="131" y="437" width="1" height="1"/><rect x="140" y="437" width="1" height="1"/><rect x="150" y="437" width="1" height="1"/><rect x="159" y="437" width="1" height="1"/><rect x="168" y="437" width="1" height="1"/><rect x="178" y="437" width="1" height="1"/><rect x="187" y="437" width="1" height="1"/><rect x="196" y="437" width="1" height="1"/><rect x="205" y="437" width="1" height="1"/><rect x="215" y="437" width="1" height="1"/><rect x="224" y="437" width="1" height="1"/><rect x="233" y="437" width="1" height="1"/><rect x="243" y="437" width="1" height="1"/><rect x="252" y="437" width="1" height="1"/><rect x="261" y="437" width="1" height="1"/><rect x="270" y="437" width="1" height="1"/><rect x="280" y="437" width="1" height="1"/><rect x="289" y="437" width="1" height="1"/><rect x="298" y="437" width="1" height="1"/><rect x="308" y="437" width="1" height="1"/><rect x="317" y="437" width="1" height="1"/><rect x="326" y="437" width="1" height="1"/><rect x="335" y="437" width="1" height="1"/><rect x="345" y="437" width="1" height="1"/><rect x="354" y="437" width="1" height="1"/><rect x="363" y="437" width="1" height="1"/><rect x="373" y="437" width="1" height="1"/><rect x="382" y="437" width="1" height="1"/><rect x="391" y="437" width="1" height="1"/><rect x="401" y="437" width="1" height="1"/><rect x="410" y="437" width="1" height="1"/><rect x="419" y="437" width="1" height="1"/><rect x="428" y="437" width="1" height="1"/><rect x="438" y="437" width="1" height="1"/><rect x="447" y="437" width="1" height="1"/><rect x="456" y="437" width="1" height="1"/><rect x="466" y="437" width="1" height="1"/></g><rect x="46" y="301" width="422" height="2" fill="#000"/><rect x="46" y="301" width="2" height="137" fill="#000"/><rect x="466" y="301" width="2" height="137" fill="#000"/><g fill="#0000ff"><rect x="45" y="437" width="3" height="1"/><rect x="47" y="423" width="1" height="1"/><rect x="45" y="410" width="3" height="1"/><rect x="47" y="397" width="1" height="1"/><rect x="45" y="384" width="3" height="1"/><rect x="47" y="370" width="1" height="1"/><rect x="45" y="357" width="3" height="1"/><rect x="47" y="343" width="1" height="1"/><rect x="45" y="330" width="3" height="1"/><rect x="47" y="317" width="1" height="1"/><rect x="45" y="303" width="3" height="1"/></g></g><polyline points="48,368.8 49,373.4 50,377.7 51,367.4 52,378.8 53,382.3 54,378.4 55,376.4 56,383.0 57,385.4 58,377.7 59,379.2 60,379.6 61,381.9 62,381.4 63,374.5 64,381.0 65,382.2 66,378.2 67,379.7 68,384.4 69,382.3 70,379.8 71,380.9 72,382.6 73,382.1 74,381.8 75,381.5 76,376.5 77,379.9 78,383.8 79,382.5 80,379.8 81,379.4 82,380.6 83,379.3 84,381.6 85,376.7 86,378.3 87,381.5 88,379.0 89,377.7 90,378.9 91,378.1 92,378.7 93,376.5 94,377.0 95,379.4 96,378.6 97,378.1 98,379.1 99,378.0 100,377.8 101,375.2 102,377.5 103,378.9 104,379.5 105,376.1 106,380.9 107,376.5 108,379.2 109,378.9 110,378.3 111,378.7 112,376.5 113,377.2 114,376.6 115,376.6 116,377.2 117,378.8 118,374.7 119,377.2 120,373.7 121,372.9 122,375.3 123,376.0 124,373.7 125,377.7 126,374.6 127,376.9 128,374.8 129,377.3 130,378.2 131,377.1 132,376.6 133,376.5 134,374.0 135,378.0 136,378.1 137,377.7 138,377.2 139,378.0 140,377.6 141,375.7 142,375.2 143,378.5 144,380.0 145,376.6 146,376.8 147,374.7 148,377.2 149,377.8 150,375.6 151,375.1 152,375.6 153,379.5 154,377.0 155,375.9 156,376.6 157,375.3 158,378.5 159,374.2 160,376.9 161,374.0 162,381.4 163,374.6 164,377.4 165,379.0 166,376.9 167,377.9 168,379.0 169,379.3 170,377.4 171,379.1 172,378.2 173,377.7 174,381.6 175,378.4 176,375.4 177,374.3 178,380.1 179,374.9 180,372.6 181,373.1 182,375.7 183,373.6 184,376.4 185,377.2 186,374.0 187,376.6 188,373.5 189,378.4 190,378.8 191,376.0 192,376.2 193,376.5 194,377.0 195,378.3 196,378.1 197,380.9 198,382.0 199,377.7 200,379.5 201,378.3 202,381.5 203,378.7 204,380.7 205,376.0 206,375.6 207,382.0 208,377.7 209,376.4 210,374.0 211,377.7 212,377.9 213,380.7 214,376.7 215,377.8 216,377.3 217,378.9 218,381.0 219,376.6 220,378.1 221,376.4 222,377.5 223,372.2 224,378.3 225,374.7 226,374.9 227,374.8 228,377.9 229,376.5 230,377.3 231,376.6 232,377.9 233,378.2 234,375.9 235,377.8 236,375.7 237,377.9 238,375.9 239,371.1 240,377.2 241,374.6 242,376.6 243,379.1 244,382.9 245,376.1 246,376.9 247,379.2 248,381.2 249,372.5 250,378.2 251,377.8 252,376.3 253,379.1 254,377.5 255,377.1 256,378.4 257,377.6 258,375.3 259,356.9 260,374.9 261,377.1 262,380.1 263,376.6 264,380.0 265,375.7 266,375.9 267,379.4 268,382.6 269,377.8 270,375.2 271,379.2 272,380.8 273,375.7 274,377.5 275,380.8 276,376.5 277,373.2 278,377.5 279,378.3 280,378.4 281,376.8 282,376.1 283,377.0 284,376.6 285,376.7 286,376.8 287,377.0 288,375.1 289,380.2 290,379.7 291,378.3 292,375.2 293,377.7 294,382.8 295,379.2 296,376.2 297,379.2 298,378.9 299,377.4 300,379.3 301,377.3 302,381.1 303,378.4 304,374.2 305,371.4 306,373.0 307,375.1 308,373.5 309,371.0 310,377.4 311,373.1 312,373.5 313,375.1 314,376.0 315,377.3 316,378.9 317,379.6 318,380.5 319,376.4 320,375.1 321,378.6 322,375.3 323,379.6 324,378.0 325,375.0 326,379.5 327,379.7 328,373.6 329,379.9 330,380.5 331,377.0 332,375.1 333,376.0 334,378.8 335,375.9 336,377.5 337,380.7 338,376.5 339,379.6 340,378.6 341,376.8 342,380.4 343,381.7 344,377.5 345,381.3 346,374.2 347,374.7 348,378.3 349,377.0 350,375.8 351,376.3 352,374.0 353,374.3 354,374.9 355,370.4 356,368.6 357,369.8 358,369.3 359,377.4 360,375.5 361,378.1 362,374.0 363,378.9 364,378.7 365,376.4 366,377.0 367,375.8 368,376.8 369,380.0 370,380.3 371,379.3 372,375.9 373,375.4 374,378.0 375,378.3 376,376.4 377,377.1 378,379.0 379,379.1 380,380.9 381,378.2 382,375.1 383,378.0 384,377.8 385,379.9 386,375.8 387,379.1 388,374.9 389,373.7 390,367.1 391,365.5 392,373.5 393,374.2 394,377.4 395,376.2 396,374.9 397,372.9 398,375.4 399,374.6 400,376.1 401,377.7 402,377.3 403,376.2 404,379.7 405,377.2 406,380.6 407,375.1 408,375.2 409,377.9 410,380.6 411,374.4 412,373.9 413,374.8 414,374.6 415,374.2 416,379.8 417,379.4 418,374.7 419,377.2 420,374.8 421,377.3 422,373.3 423,377.6 424,379.4 425,377.2 426,373.9 427,378.4 428,375.8 429,376.4 430,373.4 431,376.2 432,375.1 433,377.2 434,374.9 435,376.4 436,373.2 437,371.8 438,372.8 439,373.1 440,375.0 441,370.9 442,377.0 443,371.1 444,370.1 445,371.2 446,377.4 447,373.0 448,375.5 449,376.3 450,374.0 451,376.9 452,376.0" fill="none" stroke="#ff00ff" stroke-width="1.7" stroke-linejoin="round" shape-rendering="crispEdges"/><g font-family="Liberation Sans, sans-serif" font-size="11" fill="#000"><text x="41.6" y="305.1" text-anchor="end">20</text><text x="41.6" y="331.9" text-anchor="end">16</text><text x="41.6" y="358.7" text-anchor="end">12</text><text x="41.6" y="385.5" text-anchor="end">8</text><text x="41.6" y="412.3" text-anchor="end">4</text><text x="470.8" y="305.1">20</text><text x="470.8" y="331.9">16</text><text x="470.8" y="358.7">12</text><text x="470.8" y="385.5">8</text><text x="470.8" y="412.3">4</text><text x="49.9" y="449.2" text-anchor="middle">0.0</text><text x="96.3" y="449.2" text-anchor="middle">0.5</text><text x="142.8" y="449.2" text-anchor="middle">1.0</text><text x="189.3" y="449.2" text-anchor="middle">1.5</text><text x="235.7" y="449.2" text-anchor="middle">2.0</text><text x="282.1" y="449.2" text-anchor="middle">2.5</text><text x="328.6" y="449.2" text-anchor="middle">3.0</text><text x="375.1" y="449.2" text-anchor="middle">3.5</text><text x="421.5" y="449.2" text-anchor="middle">4.0</text><text x="467.9" y="449.2" text-anchor="middle">4.5</text></g></svg>
<div class="gb" style="left:491px;top:134px;width:140px;height:84px"></div>
<div class="gt" style="left:498px;top:128.6px;background:#fcfcfd">Disk-Info</div>
<div class="t " style="left:502px;top:144px;">Typ:</div>
<div class="t nv" style="left:542px;top:144px;letter-spacing:-0.2px;">DVD-R</div>
<div class="t " style="left:502px;top:161px;">ID:</div>
<div class="t nv" style="left:542px;top:161px;letter-spacing:-0.2px;">ProdiscF01</div>
<div class="t " style="left:502px;top:179px;">Datum:</div>
<div class="t nv" style="left:542px;top:179px;letter-spacing:-0.2px;">20 February 2006</div>
<div class="t " style="left:502px;top:197px;">Label:</div>
<div class="t nv" style="left:542px;top:197px;letter-spacing:-0.2px;">-</div>
<div class="gb" style="left:491px;top:225px;width:140px;height:205px"></div>
<div class="gt" style="left:498px;top:220px;letter-spacing:-0.2px;background:#fafafa">Einstellungen</div>
<div class="t " style="left:499.6px;top:235px;letter-spacing:-0.15px;">Geschwindigkeit</div>
<div class="edit" style="left:500px;top:250px;width:84px;height:21px"></div>
<div class="t " style="left:505px;top:254px;">8 X</div>
<div class="abs" style="left:566px;top:252px;width:16px;height:17px;border-radius:2px;background:linear-gradient(to bottom,#e1eafe,#c3d3fd 60%,#aebff5);border:1px solid #b4c8f6"><svg width="14" height="15" class="abs" style="left:0;top:0"><path d="M3.5 5.5 L7 9 L10.5 5.5" stroke="#4d6185" stroke-width="2" fill="none"/></svg></div>
<div class="abs" style="left:592px;top:248px;width:23px;height:23px;background:#ece9d8;border:1px solid #fff;border-right-color:#716f64;border-bottom-color:#716f64;box-shadow:inset -1px -1px 0 #aca899"><svg width="21" height="21" class="abs" style="left:0;top:0"><rect x="3.5" y="2.5" width="14" height="16" fill="#fff" stroke="#000" stroke-width="1.2" shape-rendering="crispEdges"/><path d="M6.6 9.8V7.6Q6.6 6.4 8 6.4H10" stroke="#008c00" stroke-width="1.3" fill="none" stroke-dasharray="1.6 0.5"/><path d="M9.6 4.2L12.4 6.4L9.6 8.6Z" fill="#008c00"/><path d="M13.6 10.6V12.6Q13.6 13.6 12.2 13.6H10.6" stroke="#008c00" stroke-width="1.3" fill="none"/><path d="M10.8 11.3L8 13.6L10.8 15.9Z" fill="#008c00"/></svg></div>
<div class="t " style="left:502px;top:281.5px;">Start</div>
<div class="t " style="left:502px;top:303.4px;">Ende</div>
<div class="edit" style="left:554px;top:276px;width:60px;height:20px"></div>
<div class="t " style="left:558px;top:280px;letter-spacing:-0.25px;">0000 MB</div>
<div class="edit" style="left:554px;top:299px;width:60px;height:20px"></div>
<div class="t " style="left:558px;top:302.4px;letter-spacing:-0.25px;">4467 MB</div>
<div class="chk" style="left:502px;top:324px;border-color:#1c5180"></div>
<div class="t " style="left:518px;top:324px;letter-spacing:-0.15px;">Schnelles Scannen</div>
<div class="chk" style="left:502px;top:345px;border-color:#1c5180"><svg width="11" height="11" style="position:absolute;left:0;top:0"><path d="M1.8 4.2 L4.5 6.9 L9.2 2.2 L9.2 5.2 L4.5 9.9 L1.8 7.2 Z" fill="#21a121"/></svg></div>
<div class="t " style="left:518px;top:346px;letter-spacing:-0.15px;width:108px;overflow:hidden;">C1/PIE anzeigen</div>
<div class="chk" style="left:502px;top:361px;border-color:#1c5180"><svg width="11" height="11" style="position:absolute;left:0;top:0"><path d="M1.8 4.2 L4.5 6.9 L9.2 2.2 L9.2 5.2 L4.5 9.9 L1.8 7.2 Z" fill="#21a121"/></svg></div>
<div class="t " style="left:518px;top:362px;letter-spacing:-0.15px;width:108px;overflow:hidden;">C2/PIF anzeigen</div>
<div class="chk" style="left:502px;top:378px;border-color:#1c5180"><svg width="11" height="11" style="position:absolute;left:0;top:0"><path d="M1.8 4.2 L4.5 6.9 L9.2 2.2 L9.2 5.2 L4.5 9.9 L1.8 7.2 Z" fill="#21a121"/></svg></div>
<div class="t " style="left:518px;top:379px;letter-spacing:-0.15px;width:108px;overflow:hidden;">Jitter anzeigen</div>
<div class="chk" style="left:502px;top:394px;border-color:#1c5180"><svg width="11" height="11" style="position:absolute;left:0;top:0"><path d="M1.8 4.2 L4.5 6.9 L9.2 2.2 L9.2 5.2 L4.5 9.9 L1.8 7.2 Z" fill="#21a121"/></svg></div>
<div class="t " style="left:518px;top:395px;letter-spacing:-0.15px;width:108px;overflow:hidden;">Lesegeschwindigkeit a</div>
<div class="chk" style="left:502px;top:410px;border-color:#cac8bb"><svg width="11" height="11" style="position:absolute;left:0;top:0"><path d="M1.8 4.2 L4.5 6.9 L9.2 2.2 L9.2 5.2 L4.5 9.9 L1.8 7.2 Z" fill="#c9c7ba"/></svg></div>
<div class="t " style="left:518px;top:411px;letter-spacing:-0.15px;width:108px;overflow:hidden;color:#aca899">Schreibgeschwindigkei</div>
<div class="gb" style="left:491px;top:435px;width:140px;height:27px"></div>
<div class="t " style="left:503px;top:443px;letter-spacing:-0.35px;">Qualitäts Score:</div>
<div class="t nv r" style="left:560px;top:443px;width:61px;">92</div>
<div class="gb" style="left:491px;top:467px;width:140px;height:57px"></div>
<div class="t " style="left:503px;top:477px;letter-spacing:-0.4px;">Fortschritt:</div>
<div class="t nv r" style="left:560px;top:477px;letter-spacing:-0.2px;width:61px;">100 %</div>
<div class="t " style="left:503px;top:492px;letter-spacing:-0.25px;">Position:</div>
<div class="t nv r" style="left:560px;top:492px;letter-spacing:-0.2px;width:61px;">4466 MB</div>
<div class="t " style="left:503px;top:507px;letter-spacing:-0.25px;">Geschwindigkeit:</div>
<div class="t nv r" style="left:560px;top:507px;letter-spacing:-0.2px;width:61px;">8.25 X</div>
<div class="abs" style="left:14px;top:467px;width:146px;height:56px;border:1px solid #aaa799;box-shadow:1px 1px 0 #fff, inset 1px 1px 0 #fff"></div><div class="t" style="left:20px;top:461px;padding:0 2px 0 15px;background:#f5f4f0;letter-spacing:-0.4px">PI Errors</div><div class="abs" style="left:24px;top:464px;width:8px;height:8px;border:1px solid #000;background:#00ffff"></div><div class="t " style="left:22.5px;top:478px;letter-spacing:-0.1px;">Durchschnitt</div><div class="t nv r" style="left:89px;top:478px;letter-spacing:-0.2px;width:61px;">4.27</div><div class="t " style="left:22.5px;top:493px;letter-spacing:-0.75px;">Maximum:</div><div class="t nv r" style="left:89px;top:493px;letter-spacing:-0.2px;width:61px;">19</div><div class="t " style="left:22.5px;top:508px;letter-spacing:-0.35px;">Gesamt:</div><div class="t nv r" style="left:89px;top:508px;letter-spacing:-0.2px;width:61px;">47637</div>
<div class="abs" style="left:172px;top:467px;width:146px;height:56px;border:1px solid #aaa799;box-shadow:1px 1px 0 #fff, inset 1px 1px 0 #fff"></div><div class="t" style="left:179px;top:461px;padding:0 2px 0 15px;background:#f5f4f0;letter-spacing:-0.4px">PI Failures</div><div class="abs" style="left:183px;top:464px;width:8px;height:8px;border:1px solid #000;background:#ffff00"></div><div class="t " style="left:181.5px;top:478px;letter-spacing:-0.1px;">Durchschnitt</div><div class="t nv r" style="left:248px;top:478px;letter-spacing:-0.2px;width:61px;">1.15</div><div class="t " style="left:181.5px;top:493px;letter-spacing:-0.75px;">Maximum:</div><div class="t nv r" style="left:248px;top:493px;letter-spacing:-0.2px;width:61px;">13</div><div class="t " style="left:181.5px;top:508px;letter-spacing:-0.35px;">Gesamt:</div><div class="t nv r" style="left:248px;top:508px;letter-spacing:-0.2px;width:61px;">13824</div>
<div class="abs" style="left:331px;top:467px;width:147px;height:43px;border:1px solid #aaa799;box-shadow:1px 1px 0 #fff, inset 1px 1px 0 #fff"></div><div class="t" style="left:337px;top:461px;padding:0 2px 0 15px;background:#f5f4f0;letter-spacing:-0.4px">Jitter</div><div class="abs" style="left:341px;top:464px;width:8px;height:8px;border:1px solid #000;background:#ff00ff"></div><div class="t " style="left:339.5px;top:478px;letter-spacing:-0.1px;">Durchschnitt</div><div class="t nv r" style="left:407px;top:478px;letter-spacing:-0.5px;width:61px;">8.58 %</div><div class="t " style="left:339.5px;top:493px;letter-spacing:-0.75px;">Maximum:</div><div class="t nv r" style="left:407px;top:493px;letter-spacing:-0.5px;width:61px;">11.8 %</div>
<div class="t " style="left:340.5px;top:511px;letter-spacing:-0.35px;">PO Ausfälle:</div>
<div class="t nv r" style="left:407px;top:511px;width:61px;">0</div>
</div></body></html>
